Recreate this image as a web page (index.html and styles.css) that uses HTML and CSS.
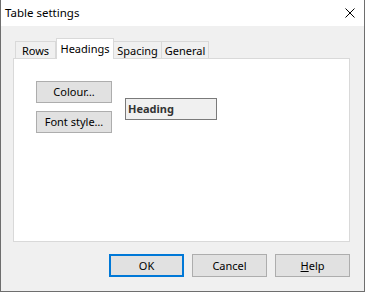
FILE: index.html
```html
<!DOCTYPE html>
<html lang="en">
<head>
  <meta charset="UTF-8" />
  <title>Table settings</title>
  <link rel="stylesheet" href="styles.css">
</head>
<body>

<div class="dialog">
  <div class="titlebar">
    <span class="title">Table settings</span>
    <button class="close" type="button" aria-label="Close">
      <svg width="10" height="10" viewBox="0 0 10 10">
        <path d="M0.5 0.5 L9.5 9.5 M9.5 0.5 L0.5 9.5" stroke="#000" stroke-width="1" fill="none"/>
      </svg>
    </button>
  </div>

  <div class="content">
    <div class="tabs">
      <div class="tab tab-rows">Rows</div>
      <div class="tab tab-headings active">Headings</div>
      <div class="tab tab-spacing">Spacing</div>
      <div class="tab tab-general">General</div>
    </div>

    <div class="panel">
      <div class="buttons-col">
        <button type="button" class="btn small">Colour…</button>
        <button type="button" class="btn small">Font style…</button>
      </div>
      <div class="sample">Heading</div>
    </div>

    <div class="actions">
      <button type="button" class="btn default">OK</button>
      <button type="button" class="btn">Cancel</button>
      <button type="button" class="btn"><u>H</u>elp</button>
    </div>
  </div>
</div>

</body>
</html>
```

FILE: styles.css
```css
body {
  margin: 0;
  font-family: "Noto Sans", "Open Sans", sans-serif;
  font-size: 11px;
  color: #000;
}

.dialog {
  width: 365px;
  height: 292px;
  box-sizing: border-box;
  background-color: #f0f0f0;
  border: 1px solid #6e6e6e;
  border-top: none;
  display: flex;
  flex-direction: column;
}

.titlebar {
  height: 26px;
  background-color: #fff;
  display: flex;
  align-items: center;
  justify-content: space-between;
  padding-left: 4px;
}

.title {
  font-size: 11.5px;
  line-height: 16px;
  margin-top: -1px;
}

.close {
  border: none;
  background: none;
  padding: 0;
  width: 10px;
  height: 10px;
  margin-right: 9px;
  margin-top: -1px;
  display: flex;
}

.content {
  padding: 12px 14px 0 12px;
}

.tabs {
  display: flex;
  align-items: flex-end;
  height: 20px;
  padding-left: 2px;
}

.tab {
  flex-shrink: 0;
  box-sizing: border-box;
  height: 17px;
  border: 1px solid #d9d9d9;
  border-bottom: none;
  background-color: #f0f0f0;
  display: flex;
  align-items: center;
  justify-content: center;
  padding-top: 1px;
  white-space: nowrap;
}

.tab + .tab {
  border-left: none;
}

.tab-rows { width: 41px; }
.tab-spacing { width: 48px; }
.tab-general { width: 47px; }

.tab.active {
  width: 58px;
  height: 21px;
  margin-bottom: -1px;
  background-color: #fff;
  border-left: 1px solid #d9d9d9;
  padding-top: 0;
  padding-bottom: 2px;
  position: relative;
  z-index: 1;
}

.panel {
  height: 184px;
  box-sizing: border-box;
  background-color: #fff;
  border: 1px solid #d9d9d9;
  padding: 22px 0 0 22px;
  display: flex;
  align-items: flex-start;
  gap: 13px;
}

.buttons-col {
  display: flex;
  flex-direction: column;
  gap: 8px;
}

.btn {
  font-family: inherit;
  font-size: 11px;
  color: #000;
  width: 75px;
  height: 23px;
  box-sizing: border-box;
  border: 1px solid #adadad;
  background-color: #e1e1e1;
  padding: 0;
  line-height: 16px;
}

.btn.small {
  width: 76px;
  height: 22px;
}

.btn.default {
  border: 2px solid #0078d7;
}

.sample {
  margin-top: 17px;
  width: 92px;
  height: 22px;
  box-sizing: border-box;
  border: 1px solid #7a7a7a;
  background-color: #f0f0f0;
  font-weight: bold;
  color: #333;
  padding-left: 2px;
  line-height: 19px;
}

.actions {
  display: flex;
  justify-content: flex-end;
  gap: 8px;
  margin-top: 12px;
}
```
